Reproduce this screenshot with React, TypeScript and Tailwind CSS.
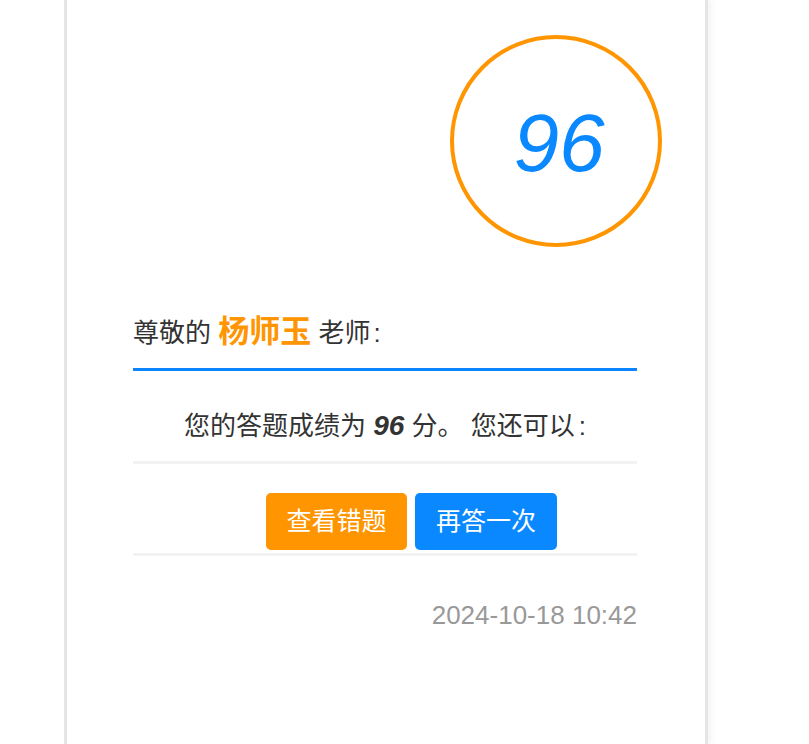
import React from "react";

export default function App() {
  const font = { fontFamily: '"Liberation Sans", "Noto Sans CJK SC", sans-serif' };
  return (
    <div className="min-h-screen bg-white" style={font}>
      <div className="ml-[64px] w-[644px] min-h-[744px] border-x-[3px] border-[#e5e5e5] bg-white pl-[66px] pr-[68px] shadow-[4px_0_5px_rgba(0,0,0,0.04)]">
        <div className="flex justify-end pt-[35px] mr-[-25px]">
          <div className="flex h-[212px] w-[212px] items-center justify-center rounded-full border-[4px] border-[#ff9500]">
            <span className="mt-[4px] ml-[6px] text-[82px] italic leading-none text-[#0a88ff]">96</span>
          </div>
        </div>
        <div className="mt-[65px] border-b-[3px] border-[#0a84ff] pb-[15px] text-[26px] leading-[40px] text-[#333]">
          尊敬的 <span className="text-[31px] font-bold text-[#ff9500]">杨师玉</span> 老师<span className="ml-[3px]">:</span>
        </div>
        <div className="border-b-[3px] border-[#f2f2f2] pt-[35px] pb-[15px] text-center text-[26px] leading-[40px] text-[#333]">
          您的答题成绩为 <span className="text-[28px] font-bold italic">96</span> 分。 您还可以<span className="ml-[4px]">:</span>
        </div>
        <div className="flex gap-[8px] border-b-[3px] border-[#f2f2f2] pl-[133px] pt-[29px] pb-[3px]">
          <button className="flex h-[57px] w-[141px] items-center justify-center rounded-[5px] bg-[#ff9500] text-[25px] text-white">
            查看错题
          </button>
          <button className="flex h-[57px] w-[142px] items-center justify-center rounded-[5px] bg-[#0a88ff] text-[25px] text-white">
            再答一次
          </button>
        </div>
        <div className="mt-[39px] text-right text-[26px] leading-[40px] text-[#999]">2024-10-18 10:42</div>
      </div>
    </div>
  );
}
